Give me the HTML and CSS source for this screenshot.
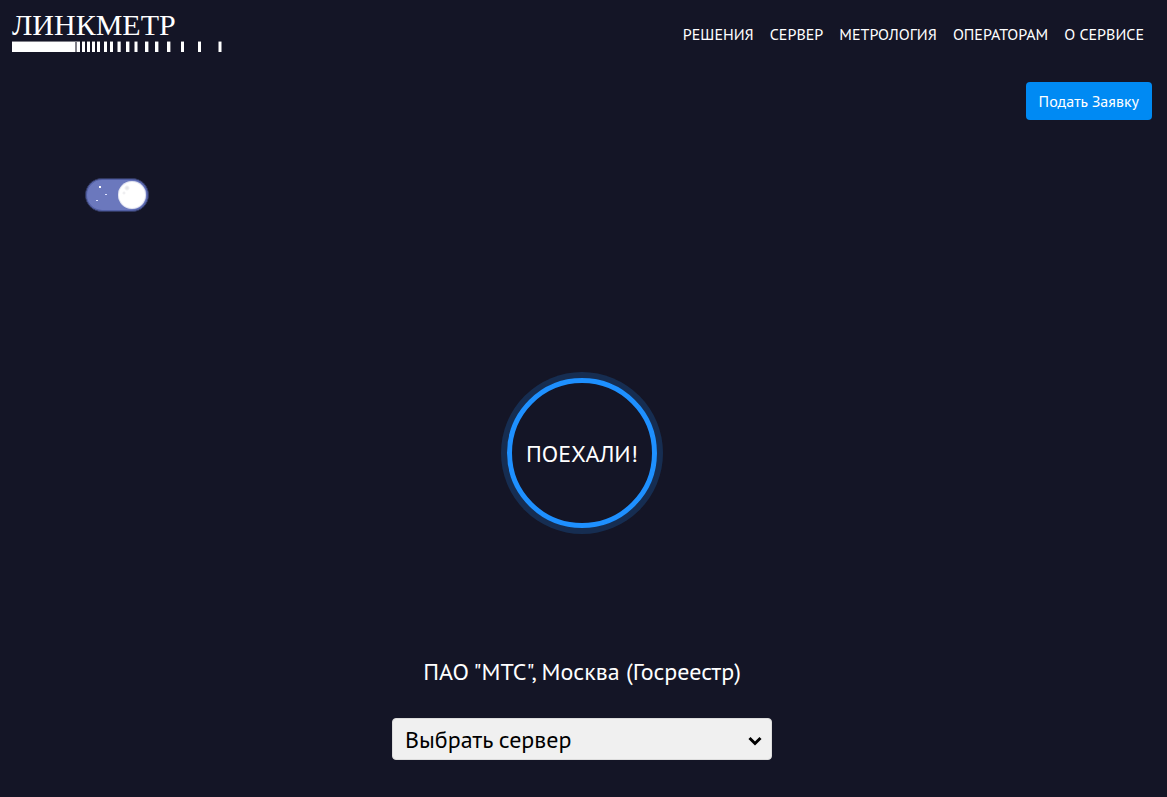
FILE: index.html
```html
<!DOCTYPE html>
<html lang="ru">
<head>
  <meta charset="UTF-8">
  <meta name="viewport" content="width=device-width, initial-scale=1">
  <title>ЛИНКМЕТР</title>
  <link rel="stylesheet" href="styles.css">
</head>
<body>
  <header class="header">
    <a class="logo" href="#">
      <span class="logo-name">ЛИНКМЕТР</span>
      <svg class="logo-scale" width="210" height="11" viewBox="0 0 210 11" fill="#fff" aria-hidden="true">
        <path d="M0 1h63v10H0zM65 1h3v10h-3zM70 1h3v10h-3zM75 1h3v10h-3zM80 1h3v10h-3zM85 1h3v10h-3zM92 1h3v10h-3zM98 1h3v10h-3zM105.500 1h3.200v10h-3.200zM114 1h3.400v10H114zM122.500 1h3v10h-3zM133 1h3.400v10H133zM143 1h3.400v10H143zM155 1h3.400v10H155zM169 1h3v10h-3zM186 1h3v10h-3zM206.500 1h3v10h-3z"/>
        <path opacity=".45" d="M0 0h63v1H0zM63 0h2v11h-2zM65 0h3v1h-3zM70 0h3v1h-3zM75 0h3v1h-3zM80 0h3v1h-3zM85 0h3v1h-3zM92 0h3v1h-3zM98 0h3v1h-3zM105.500 0h3.200v1h-3.200zM114 0h3.400v1H114zM122.500 0h3v1h-3zM133 0h3.400v1H133zM143 0h3.400v1H143zM155 0h3.400v1H155zM169 0h3v1h-3zM186 0h3v1h-3zM206.500 0h3v1h-3z"/>
      </svg>
    </a>
    <nav class="nav">
      <a href="#">РЕШЕНИЯ</a>
      <a href="#">СЕРВЕР</a>
      <a href="#">МЕТРОЛОГИЯ</a>
      <a href="#">ОПЕРАТОРАМ</a>
      <a href="#">О СЕРВИСЕ</a>
    </nav>
  </header>

  <div class="actions">
    <button class="btn" type="button">Подать Заявку</button>
  </div>

  <div class="theme">
    <input class="theme-switch" type="checkbox" role="switch" aria-label="Тёмная тема" checked>
  </div>

  <main class="main">
    <button class="start" type="button">ПОЕХАЛИ!</button>
    <p class="server-name">ПАО "МТС", Москва (Госреестр)</p>
    <div class="server-select">
      <select aria-label="Выбрать сервер">
        <option>Выбрать сервер</option>
      </select>
      <svg class="chevron" width="14" height="10" viewBox="0 0 14 10" aria-hidden="true">
        <path d="M1.500 2L7 7.500 12.500 2" fill="none" stroke="#000" stroke-width="3"/>
      </svg>
    </div>
  </main>
</body>
</html>
```
FILE: styles.css
```css
* {
  box-sizing: border-box;
}
body {
  margin: 0;
  padding: 0 15px 0 12px;
  font-family: "PT Sans", "Noto Sans", sans-serif;
  font-size: 16px;
  line-height: 24px;
  background: #141526;
  color: #fff;
}
button, select {
  font-family: inherit;
}

/* Header */
.header {
  display: flex;
  justify-content: space-between;
  align-items: center;
  height: 68px;
}
.logo {
  display: flex;
  flex-direction: column;
  padding-bottom: 7px;
  color: #fff;
  text-decoration: none;
}
.logo-name {
  font-family: "Liberation Serif", serif;
  font-size: 30px;
  line-height: 32px;
}
.nav {
  display: flex;
  gap: 16px;
  padding-right: 8px;
}
.nav a {
  color: #fff;
  text-decoration: none;
}

.actions {
  display: flex;
  justify-content: flex-end;
  padding-top: 14px;
}
.btn {
  height: 38px;
  padding: 0 13px;
  font-size: 16px;
  border: none;
  border-radius: 4px;
  background: #008af3;
  color: #fff;
  cursor: pointer;
}

/* Day / night switch */
.theme {
  display: flex;
  padding: 58px 73px 0;
}
.theme-switch {
  appearance: none;
  display: flex;
  justify-content: flex-end;
  align-items: center;
  width: 64px;
  height: 34px;
  margin: 0;
  padding: 2px;
  border: 1px solid #30375f;
  border-radius: 17px;
  /* stars */
  background:
    linear-gradient(#fff, #fff) 13px 7px / 2px 2px no-repeat,
    linear-gradient(#dfe3ff, #dfe3ff) 19px 15px / 2px 1px no-repeat,
    linear-gradient(#dfe3ff, #dfe3ff) 10px 21px / 2px 1px no-repeat,
    #6b78bd;
  box-shadow: inset 0 0 0 1px #515ea3;
  cursor: pointer;
}
/* moon */
.theme-switch::before {
  content: "";
  width: 28px;
  height: 28px;
  border-radius: 50%;
  background:
    radial-gradient(circle at 9px 7px, #e6e6ea 1px, transparent 3px),
    radial-gradient(circle at 6px 12px, #e6e6ea 0, transparent 2px),
    #fff;
  box-shadow: inset 0 0 0 1px #e3e5f2;
}
.theme-switch:not(:checked) {
  justify-content: flex-start;
}

/* Speed test */
.main {
  display: flex;
  flex-direction: column;
  align-items: center;
  padding: 166px 0 32px;
}
.start {
  width: 150px;
  height: 150px;
  padding: 0;
  font-size: 24px;
  border: 5px solid #1e90ff;
  border-radius: 50%;
  background: transparent;
  box-shadow: 0 0 0 6px rgba(30, 144, 255, 0.2);
  color: #fff;
  cursor: pointer;
}
.server-name {
  margin: 126px 0 28px;
  font-size: 24px;
  line-height: 36px;
}
.server-select {
  position: relative;
  width: 380px;
  max-width: 100%;
}
.server-select select {
  appearance: none;
  width: 100%;
  height: 42px;
  padding: 0 32px 0 12px;
  font-size: 24px;
  border: 1px solid #dcdcdc;
  border-radius: 4px;
  background: #f0f0f0;
  color: #000;
}
.chevron {
  position: absolute;
  top: 18px;
  right: 10px;
  pointer-events: none;
}
```
